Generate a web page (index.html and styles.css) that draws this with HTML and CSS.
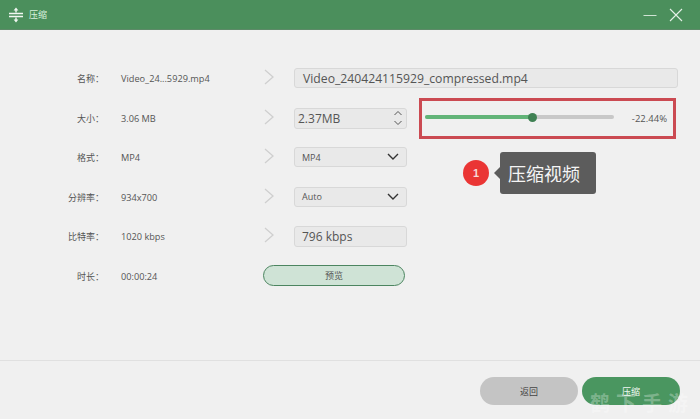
FILE: index.html
```html
<!DOCTYPE html>
<html lang="zh-CN">
<head>
<meta charset="utf-8">
<title>压缩</title>
<link rel="stylesheet" href="styles.css">
</head>
<body>
<div class="app">
  <header class="titlebar">
    <svg class="logo" viewBox="0 0 16 16" width="16" height="16"><path d="M8 0.5 5.6 3.6h4.8zM8 15.5 5.6 12.4h4.8z" fill="#f1f7f2"/><path d="M8 3v2.4M8 10.6V13" stroke="#f1f7f2" stroke-width="1.4"/><path d="M1 6.6h14M1 9.4h14" stroke="#f1f7f2" stroke-width="1.5"/></svg>
    <span class="title">压缩</span>
    <span class="spacer"></span>
    <svg class="winbtn" viewBox="0 0 14 14" width="14" height="14"><path d="M0.5 7.5h13" stroke="#cfe3d4" stroke-width="1"/></svg>
    <svg class="winbtn" viewBox="0 0 14 14" width="14" height="14"><path d="M1 1l12 12M13 1 1 13" stroke="#e6f1e8" stroke-width="1.1"/></svg>
  </header>

  <main class="form">
    <div class="row">
      <span class="label">名称：</span><span class="value">Video_24...5929.mp4</span>
      <svg class="arrow" viewBox="0 0 10 16" width="10" height="16"><path d="M1 1l8 7-8 7" fill="none" stroke="#cfcfcf" stroke-width="1.3"/></svg>
      <div class="field wide large">Video_240424115929_compressed.mp4</div>
    </div>
    <div class="row">
      <span class="label">大小：</span><span class="value">3.06 MB</span>
      <svg class="arrow" viewBox="0 0 10 16" width="10" height="16"><path d="M1 1l8 7-8 7" fill="none" stroke="#cfcfcf" stroke-width="1.3"/></svg>
      <div class="field medium spin">2.37MB
        <svg viewBox="0 0 10 18" width="10" height="18"><path d="M1.500 6 5 2.500 8.500 6M1.500 12 5 15.500 8.500 12" fill="none" stroke="#555" stroke-width="1"/></svg>
      </div>
      <div class="slider-box">
        <div class="track"><div class="fill"></div><div class="thumb"></div></div>
        <span class="percent">-22.44%</span>
      </div>
    </div>
    <div class="row">
      <span class="label">格式：</span><span class="value">MP4</span>
      <svg class="arrow" viewBox="0 0 10 16" width="10" height="16"><path d="M1 1l8 7-8 7" fill="none" stroke="#cfcfcf" stroke-width="1.3"/></svg>
      <div class="field select">MP4
        <svg viewBox="0 0 12 8" width="12" height="8"><path d="M1 1l5 5 5-5" fill="none" stroke="#333" stroke-width="1.400"/></svg>
      </div>
    </div>
    <div class="row">
      <span class="label">分辨率：</span><span class="value">934x700</span>
      <svg class="arrow" viewBox="0 0 10 16" width="10" height="16"><path d="M1 1l8 7-8 7" fill="none" stroke="#cfcfcf" stroke-width="1.3"/></svg>
      <div class="field select">Auto
        <svg viewBox="0 0 12 8" width="12" height="8"><path d="M1 1l5 5 5-5" fill="none" stroke="#333" stroke-width="1.400"/></svg>
      </div>
    </div>
    <div class="row">
      <span class="label">比特率：</span><span class="value">1020 kbps</span>
      <svg class="arrow" viewBox="0 0 10 16" width="10" height="16"><path d="M1 1l8 7-8 7" fill="none" stroke="#cfcfcf" stroke-width="1.3"/></svg>
      <div class="field medium">796 kbps</div>
    </div>
    <div class="row">
      <span class="label">时长：</span><span class="value">00:00:24</span>
      <button class="preview">预览</button>
    </div>
  </main>

  <div class="note">
    <span class="badge">1</span>
    <span class="bubble">压缩视频</span>
  </div>

  <footer class="footer">
    <button class="btn back">返回</button>
    <button class="btn go">压缩</button>
  </footer>
  <div class="watermark">鹤下手游</div>
</div>
</body>
</html>
```
FILE: styles.css
```css
* { box-sizing: border-box; }
html, body { margin: 0; padding: 0; }
body {
  width: 700px; height: 419px; overflow: hidden;
  font-family: "Liberation Sans", "Noto Sans CJK SC", sans-serif;
  background: #f0f0f0; color: #4a4a4a;
}
.app { position: relative; width: 700px; height: 419px; display: flex; flex-direction: column; overflow: hidden; }

.titlebar {
  height: 30px; flex: none; display: flex; align-items: center;
  padding: 0 17px 0 8px; background: #4b8f5c; border-bottom: 1px solid #5d8a68;
}
.logo { margin-right: 5px; }
.title { font-size: 9px; color: #d8f0dc; }
.spacer { flex: 1; }
.winbtn { margin-left: 12px; }

.form { flex: 1; padding-top: 38px; display: flex; flex-direction: column; }
.row { height: 39.6px; flex: none; display: flex; align-items: flex-start; position: relative; }
.label { width: 104px; margin-top: 5px; text-align: right; font-size: 9px; line-height: 12px; color: #555; }
.value {
  width: 143px; margin-top: 5px; margin-left: 17px; font-size: 9.200px; line-height: 12px;
  color: #555; font-family: "Open Sans", "Noto Sans CJK SC", sans-serif;
}
.arrow { margin-top: 1px; margin-right: 20px; flex: none; }

.field {
  height: 20px; background: #e9e9e9; border: 1px solid #d8d8d8; border-radius: 3px;
  display: flex; align-items: center; color: #555;
  font-family: "Open Sans", "Noto Sans CJK SC", sans-serif;
}
.wide { width: 384px; }
.large { font-size: 12.200px; padding-left: 8px; }
.medium { width: 113px; font-size: 12px; padding-left: 3px; }
.row:nth-child(2) .field { height: 21px; }
.row:nth-child(5) .field { height: 21px; padding-left: 7px; }
.spin { justify-content: space-between; padding-right: 3px; }
.select {
  width: 113px; font-size: 9px; padding: 0 7px; justify-content: space-between;
}

.slider-box {
  position: absolute; left: 419px; top: -10px; width: 257px; height: 41px;
  border: 3px solid #cb4a52; display: flex; align-items: center;
  padding: 0 6px 0 3px;
}
.track { position: relative; width: 189px; height: 4px; background: #c8c8c8; border-radius: 2px; margin-top: -2px; }
.fill { width: 107px; height: 100%; background: #62b478; border-radius: 2px; }
.thumb { position: absolute; left: 103px; top: -2.500px; width: 9px; height: 9px; border-radius: 50%; background: #3f8153; }
.percent { margin-left: auto; font-size: 9.500px; color: #555; font-family: "Open Sans", sans-serif; }

.preview {
  width: 142px; height: 21px; padding: 0;
  position: absolute; left: 263px; top: -1px;
  border: 1px solid #4c8560; border-radius: 11px; background: #cfe3d6;
  font: 9px "Noto Sans CJK SC", sans-serif; color: #555;
}

.note { position: absolute; left: 463px; top: 152px; display: flex; align-items: center; height: 42px; }
.badge {
  width: 26px; height: 26px; border-radius: 50%; background: #ea3534; color: #f6d9d8;
  display: flex; align-items: center; justify-content: center; font-size: 11px; font-weight: bold;
}
.bubble {
  position: relative; margin-left: 11px; width: 96px; height: 42px; padding-left: 8px;
  background: #5c5c5c; border-radius: 3px; color: #f5f5f5;
  font: 18px/42px "Noto Sans CJK SC", sans-serif; white-space: nowrap;
}
.bubble::before {
  content: ""; position: absolute; left: -6px; top: 15px;
  border: 6px solid transparent; border-left: 0; border-right-color: #5c5c5c;
}

.footer {
  height: 59px; flex: none; border-top: 1px solid #e0e0e0; display: flex;
  justify-content: flex-end; align-items: flex-start; gap: 4px; padding: 16px 20px 0 0;
}
.btn {
  width: 98px; height: 28px; padding: 0; border: 0; border-radius: 14px;
  font: 9px "Noto Sans CJK SC", sans-serif;
}
.back { background: #c4c4c4; color: #444; }
.go { background: #4a9660; color: #f1f7f2; }
.watermark {
  position: absolute; left: 590px; top: 388px; width: 110px; white-space: nowrap;
  font: bold 20px/30px "Noto Sans CJK SC", sans-serif; letter-spacing: 6px;
  color: rgba(255, 255, 255, 0.3);
}
```
